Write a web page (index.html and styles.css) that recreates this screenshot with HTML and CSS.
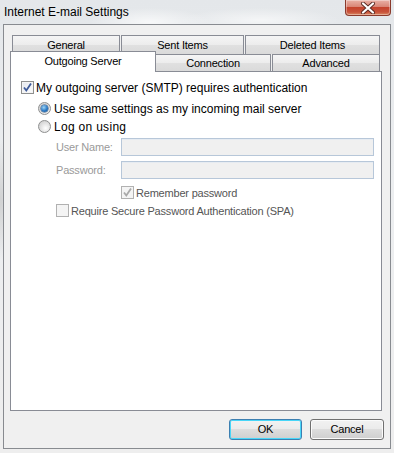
FILE: index.html
```html
<!DOCTYPE html>
<html>
<head>
<meta charset="utf-8">
<link rel="stylesheet" href="styles.css">
</head>
<body>
<div class="window">
  <div class="titlebar">
    <span class="title">Internet E-mail Settings</span>
    <div class="close">
      <svg width="18" height="12" viewBox="0 0 18 12">
        <path d="M4 1.5 L14 10.5 M14 1.5 L4 10.5" stroke="#5a2a22" stroke-width="4" stroke-linecap="round"/>
        <path d="M4 1.5 L14 10.5 M14 1.5 L4 10.5" stroke="#ffffff" stroke-width="2.2" stroke-linecap="round"/>
      </svg>
    </div>
  </div>
  <div class="client">
    <div class="tabs">
      <div class="row row1">
        <div class="tab t-general">General</div>
        <div class="tab t-sent">Sent Items</div>
        <div class="tab t-deleted">Deleted Items</div>
      </div>
      <div class="row row2">
        <div class="tab selected t-outgoing">Outgoing Server</div>
        <div class="tab t-connection">Connection</div>
        <div class="tab t-advanced">Advanced</div>
      </div>
    </div>
    <div class="panel">
      <div class="line l1">
        <span class="cb checked"><svg width="11" height="11" viewBox="0 0 11 11"><path d="M2 5.5 L4.3 8.5 L9 1.5" fill="none" stroke="#3e5a99" stroke-width="1.8"/></svg></span>
        <span class="txt">My outgoing server (SMTP) requires authentication</span>
      </div>
      <div class="line l2 ind1">
        <span class="radio on"><span class="dot"></span></span>
        <span class="txt">Use same settings as my incoming mail server</span>
      </div>
      <div class="line l3 ind1">
        <span class="radio"></span>
        <span class="txt wide">Log on using</span>
      </div>
      <div class="line l4 ind2">
        <span class="lbl">User Name:</span>
        <span class="input"></span>
      </div>
      <div class="line l5 ind2">
        <span class="lbl">Password:</span>
        <span class="input"></span>
      </div>
      <div class="line l6 ind3">
        <span class="cb disabled"><svg width="11" height="11" viewBox="0 0 11 11"><path d="M2 5.5 L4.3 8.5 L9 1.5" fill="none" stroke="#a9a9a9" stroke-width="1.8"/></svg></span>
        <span class="txt gray">Remember password</span>
      </div>
      <div class="line l7 ind2">
        <span class="cb disabled"></span>
        <span class="txt gray">Require Secure Password Authentication (SPA)</span>
      </div>
    </div>
    <div class="buttons">
      <div class="btn default">OK</div>
      <div class="btn">Cancel</div>
    </div>
  </div>
</div>
</body>
</html>
```
FILE: styles.css
```css
html, body {
  margin: 0;
  padding: 0;
}
body {
  font-family: "Liberation Sans", Arial, sans-serif;
  font-size: 12px;
  color: #000;
}
.window {
  width: 394px;
  height: 453px;
  box-sizing: border-box;
  background:
    radial-gradient(ellipse 60px 14px at 150px 22px, rgba(255,255,255,0.7), rgba(255,255,255,0)),
    radial-gradient(ellipse 80px 12px at 260px 20px, rgba(255,255,255,0.6), rgba(255,255,255,0)),
    radial-gradient(ellipse 10px 60px at 1px 200px, rgba(190,190,190,0.6), rgba(255,255,255,0)),
    linear-gradient(to bottom, #e4e7ea, #eceef0 40%, #eeeeee);
  overflow: hidden;
}
.titlebar {
  height: 24px;
  display: flex;
  justify-content: space-between;
  align-items: flex-start;
}
.title {
  margin-left: 4px;
  margin-top: 5px;
  line-height: 14px;
  color: #000;
}
.close {
  width: 44px;
  height: 15px;
  margin-right: 3px;
  border: 1px solid #8a3a2c;
  border-top: none;
  border-radius: 0 0 4px 4px;
  background: linear-gradient(to bottom, #eab2a6 0%, #d98676 45%, #c5442d 50%, #c8523a 80%, #da8a62 100%);
  display: flex;
  justify-content: center;
  align-items: center;
  box-shadow: inset 0 0 0 1px rgba(255,255,255,0.35);
}
.client {
  margin: 0 3px;
  height: 425px;
  box-sizing: border-box;
  border: 1px solid #888b90;
  background: #f0f0f0;
  padding: 10px 8px 0 6px;
}
.tabs {
  display: flex;
  flex-direction: column;
}
.row {
  display: flex;
}
.row1 {
  height: 19px;
  padding-left: 2px;
}
.row2 {
  height: 17px;
  align-items: flex-end;
}
.tab {
  box-sizing: border-box;
  border: 1px solid #898c95;
  border-bottom: none;
  background: linear-gradient(to bottom, #f5f5f5, #ececec 50%, #e0e0e0 51%, #dadada);
  text-align: center;
  height: 100%;
  font-size: 11px;
  letter-spacing: -0.2px;
}
.row1 .tab { line-height: 18px; }
.row2 .tab { line-height: 17px; height: 17px; }
.t-general { width: 108px; }
.t-sent { width: 123px; margin-left: 1px; }
.t-deleted { width: 135px; margin-left: 1px; }
.t-outgoing { width: 146px; }
.t-connection { width: 115px; border-left: none; }
.t-advanced { width: 108px; margin-left: 1px; }
.row2 .tab.selected {
  height: 21px;
  margin-bottom: -1px;
  background: #fff;
  position: relative;
  z-index: 1;
  line-height: 19px;
}
.panel {
  height: 340px;
  box-sizing: border-box;
  border: 1px solid #898c95;
  background: #fff;
  padding: 9px 0 0 10px;
}
.line {
  display: flex;
  align-items: center;
  height: 13px;
}
.l2 { margin-top: 8px; }
.l3 { margin-top: 5px; }
.l4 { margin-top: 5px; height: 18px; }
.l5 { margin-top: 5px; height: 18px; }
.l6 { margin-top: 7px; }
.l7 { margin-top: 5px; }
.ind1 { padding-left: 17px; }
.ind2 { padding-left: 35px; }
.ind3 { padding-left: 100px; }
.txt {
  margin-left: 2px;
  line-height: 14px;
  white-space: nowrap;
}
.txt.wide { letter-spacing: 0.3px; }
.txt.gray {
  color: #555555;
  font-size: 11px;
  letter-spacing: -0.2px;
}
.cb {
  width: 13px;
  height: 13px;
  box-sizing: border-box;
  border: 1px solid #8e8f8f;
  background: linear-gradient(135deg, #dcdcdc, #ffffff);
  box-shadow: inset 0 0 0 1px #f4f4f4;
  display: flex;
  align-items: center;
  justify-content: center;
  flex: none;
}
.cb.checked {
  background: linear-gradient(135deg, #e4e7ee, #fdfdfd);
}
.cb.disabled {
  border-color: #b1b1b1;
  background: #f4f4f4;
  box-shadow: none;
}
.radio {
  width: 13px;
  height: 13px;
  box-sizing: border-box;
  border-radius: 50%;
  border: 1px solid #8e8f8f;
  background: radial-gradient(circle at 60% 65%, #ffffff, #d6d6d6 70%);
  display: flex;
  align-items: center;
  justify-content: center;
  flex: none;
  margin-right: 1px;
}
.radio .dot {
  width: 7px;
  height: 7px;
  border-radius: 50%;
  background: radial-gradient(circle at 40% 35%, #9fd5f5, #2a78c4 55%, #124e86);
  box-shadow: 0 0 0 0.5px #2b4f7a;
}
.lbl {
  width: 65px;
  color: #9a9a9a;
  line-height: 14px;
  white-space: nowrap;
  font-size: 11px;
  letter-spacing: -0.2px;
}
.input {
  width: 253px;
  height: 18px;
  box-sizing: border-box;
  border: 1px solid #b7c7d9;
  background: #f0f0f0;
  box-shadow: inset 0 1px 0 #e6ebf1;
}
.buttons {
  display: flex;
  justify-content: flex-end;
  gap: 8px;
  margin-top: 8px;
  margin-right: -2px;
}
.btn {
  width: 73px;
  height: 21px;
  box-sizing: border-box;
  border: 1px solid #707070;
  border-radius: 3px;
  background: linear-gradient(to bottom, #f2f2f2, #ebebeb 48%, #dddddd 50%, #cfcfcf);
  box-shadow: inset 0 0 0 1px #fbfbfb;
  text-align: center;
  line-height: 19px;
  font-size: 11px;
  letter-spacing: -0.2px;
}
.btn.default {
  border-color: #3c7fb1;
  box-shadow: inset 0 0 0 1px #48d6f8;
  width: 73px;
}
.btn + .btn { width: 74px; }
```
